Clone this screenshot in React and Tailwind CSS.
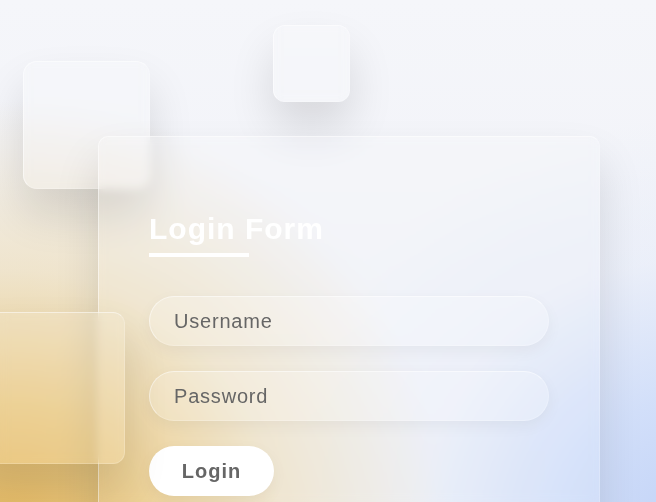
export default function App() {
  const glass =
    "border border-white/50 border-r-white/20 border-b-white/20 bg-white/10 backdrop-blur-[5px] shadow-[0_25px_45px_rgba(0,0,0,0.12)]";
  const field =
    "h-[50px] w-full rounded-full border border-white/50 border-r-white/20 border-b-white/20 bg-white/20 pl-6 text-[20px] tracking-[0.8px] text-[#666] shadow-[0_5px_15px_rgba(0,0,0,0.05)] outline-none placeholder:text-[#666]";

  return (
    <div className="relative h-[502px] w-[656px] overflow-hidden bg-[radial-gradient(circle_at_10px_540px,#e6b85e_0px,#eacb88_130px,rgba(238,222,186,0.7)_270px,rgba(243,244,249,0)_440px),radial-gradient(circle_at_690px_530px,#c2d3f7_0px,rgba(205,220,250,0.85)_130px,rgba(228,235,250,0.45)_270px,rgba(243,244,249,0)_410px),linear-gradient(#f5f6fa,#eef0f7)] font-['Liberation_Sans',Arial,sans-serif]">
      {/* floating glass squares */}
      <div className={`absolute left-[23px] top-[61px] z-0 h-[128px] w-[127px] rounded-[14px] ${glass}`} />
      <div className={`absolute left-[273px] top-[25px] z-0 h-[77px] w-[77px] rounded-[12px] ${glass}`} />
      <div className={`absolute left-[-30px] top-[312px] z-20 h-[152px] w-[155px] rounded-[12px] ${glass}`} />

      <div className={`relative z-10 ml-[98px] mt-[136px] h-[420px] w-[502px] rounded-[10px] p-[50px] ${glass}`}>
        <h2 className="mt-[24px] text-[30px] font-bold leading-[36px] tracking-[1px] text-white">
          Login Form
        </h2>
        <div className="mt-[6px] h-1 w-[100px] bg-white" />

        <div className="mt-[39px] flex flex-col gap-[25px]">
          <input type="text" placeholder="Username" className={field} />
          <input type="password" placeholder="Password" className={field} />
          <button
            type="button"
            className="h-[50px] w-[125px] rounded-full bg-white text-[20px] font-bold tracking-[1px] text-[#666] shadow-[0_5px_15px_rgba(0,0,0,0.05)]"
          >
            Login
          </button>
        </div>
      </div>
    </div>
  );
}
